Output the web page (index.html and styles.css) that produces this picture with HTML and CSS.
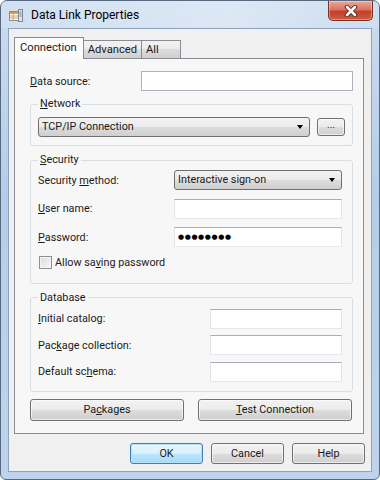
FILE: index.html
```html
<!DOCTYPE html>
<html lang="en">
<head>
    <meta charset="UTF-8">
    <title>Data Link Properties</title>
    <link rel="stylesheet" href="styles.css">
</head>
<body>
    <div class="window">
        <div class="titlebar">
            <svg class="app-icon" width="16" height="16" viewBox="0 0 16 16">
                <rect x="1.5" y="3.5" width="9" height="9" fill="#fff" stroke="#8a8a8a"/>
                <rect x="2" y="4" width="8" height="2" fill="#e39a3b"/>
                <path d="M2 8h8M2 10h8M5 6v6" stroke="#c9a36a" stroke-width="1"/>
                <rect x="10.5" y="1.5" width="4" height="12" fill="#dfe6ee" stroke="#7d8794"/>
                <path d="M11.5 4h2M11.5 6h2M11.5 8h2" stroke="#6b7683"/>
            </svg>
            <span class="title">Data Link Properties</span>
            <div class="close-btn">
                <svg width="14" height="12" viewBox="0 0 14 12">
                    <path d="M3 2l8 8M11 2l-8 8" stroke="#5a2118" stroke-width="4.4" stroke-linecap="round"/>
                    <path d="M3 2l8 8M11 2l-8 8" stroke="#fff" stroke-width="2.6" stroke-linecap="round"/>
                </svg>
            </div>
        </div>

        <div class="client">
            <div class="tabs">
                <div class="tab active">Connection</div>
                <div class="tab">Advanced</div>
                <div class="tab">All</div>
            </div>

            <div class="pane">
                <div class="row source-row">
                    <label><u>D</u>ata source:</label>
                    <div class="textbox wide"></div>
                </div>

                <fieldset class="group network">
                    <legend><u>N</u>etwork</legend>
                    <div class="net-row">
                        <div class="combo net-combo">TCP/IP Connection<span class="arrow"></span></div>
                        <div class="btn dots">...</div>
                    </div>
                </fieldset>

                <fieldset class="group security">
                    <legend><u>S</u>ecurity</legend>
                    <div class="row sec-row">
                        <label>Security <u>m</u>ethod:</label>
                        <div class="combo sec-field">Interactive sign-on<span class="arrow"></span></div>
                    </div>
                    <div class="row sec-row">
                        <label><u>U</u>ser name:</label>
                        <div class="textbox sec-field"></div>
                    </div>
                    <div class="row sec-row">
                        <label><u>P</u>assword:</label>
                        <div class="textbox sec-field"><span class="pw">●●●●●●●●</span></div>
                    </div>
                    <div class="check-row">
                        <span class="checkbox"></span>
                        <span>Allow sa<u>v</u>ing password</span>
                    </div>
                </fieldset>

                <fieldset class="group database">
                    <legend>Database</legend>
                    <div class="row db-row">
                        <label><u>I</u>nitial catalog:</label>
                        <div class="textbox db-field"></div>
                    </div>
                    <div class="row db-row">
                        <label>Pac<u>k</u>age collection:</label>
                        <div class="textbox db-field"></div>
                    </div>
                    <div class="row db-row">
                        <label>Default sc<u>h</u>ema:</label>
                        <div class="textbox db-field"></div>
                    </div>
                </fieldset>

                <div class="pane-buttons">
                    <div class="btn big">Pa<u>c</u>kages</div>
                    <div class="btn big"><u>T</u>est Connection</div>
                </div>
            </div>

            <div class="dialog-buttons">
                <div class="btn action default">OK</div>
                <div class="btn action">Cancel</div>
                <div class="btn action">Help</div>
            </div>
        </div>
    </div>
</body>
</html>
```
FILE: styles.css
```css
* {
    box-sizing: border-box;
}
body {
    margin: 0;
    font-family: Roboto, "Liberation Sans", sans-serif;
    font-size: 10.8px;
    color: #1a1a1a;
    background: #ffffff;
}
u {
    text-decoration: underline;
    text-underline-offset: 1px;
}
.window {
    width: 380px;
    height: 480px;
    border: 1px solid #58697f;
    border-radius: 7px 7px 6px 6px;
    background: linear-gradient(to bottom, #cadcf0 0%, #b6cde9 40%, #bfd4ec 100%);
    padding: 0 7px 7px 7px;
    display: flex;
    flex-direction: column;
}
.titlebar {
    height: 27px;
    display: flex;
    align-items: center;
    background: linear-gradient(to right, rgba(255, 255, 255, 0.15), rgba(255, 255, 255, 0.35) 60%, rgba(255, 255, 255, 0.1));
    margin: 0 -7px;
    padding-left: 7px;
}
.app-icon {
    margin-right: 7px;
    margin-top: 2px;
}
.title {
    font-size: 12px;
    color: #000;
    margin-top: 1px;
}
.close-btn {
    margin-left: auto;
    margin-right: 6px;
    align-self: flex-start;
    width: 45px;
    height: 20px;
    border: 1px solid #7a2f24;
    border-top: none;
    border-radius: 0 0 5px 5px;
    background: linear-gradient(to bottom, #e9a99b 0%, #d9735f 45%, #c4402a 55%, #cf5a40 100%);
    display: flex;
    align-items: center;
    justify-content: center;
    box-shadow: inset 0 0 0 1px rgba(255, 255, 255, 0.35);
}
.client {
    flex: 1;
    background: #f0f0f0;
    border: 1px solid #8ea2bd;
    padding: 8px 6px 7px 5px;
    display: flex;
    flex-direction: column;
}
.tabs {
    display: flex;
    height: 21px;
    align-items: flex-end;
    position: relative;
    z-index: 1;
}
.tab {
    height: 18px;
    padding: 0 3px 0 4px;
    border: 1px solid #898c95;
    border-bottom: none;
    border-left: none;
    background: linear-gradient(to bottom, #f2f2f2 0%, #ebebeb 50%, #dddddd 50%, #cfcfcf 100%);
    line-height: 18px;
    font-size: 11.2px;
}
.tab:nth-child(2) {
    padding-right: 4px;
}
.tab:nth-child(3) {
    width: 39px;
}
.tab.active {
    background: #fbfbfb;
    border-left: 1px solid #898c95;
    padding: 0 6px 0 5px;
    line-height: 19px;
    margin-bottom: -1px;
    height: 22px;
}
.pane {
    flex: 1;
    border: 1px solid #898c95;
    background: #f7f7f7;
    margin-right: 1px;
    padding: 12px 10px 0 15px;
    display: flex;
    flex-direction: column;
}
.row {
    display: flex;
    align-items: center;
}
.row label {
    flex: 1;
}
.source-row {
    height: 20px;
}
.textbox {
    height: 20px;
    background: #fff;
    border: 1px solid #e2e3ea;
    border-top-color: #abadb3;
    border-bottom-color: #e3e9ef;
}
.textbox.wide {
    width: 212px;
    border-color: #aab4c0;
}
.group {
    margin: 6px 0 0 0;
    border: 1px solid #d5dfe5;
    border-radius: 3px;
    padding: 0 10px 0 7px;
    min-width: 0;
}
.group legend {
    padding: 0 2px;
    line-height: 14px;
    margin-left: 0;
}
.network {
    padding-top: 6px;
    padding-right: 6px;
    padding-bottom: 8px;
}
.net-row {
    display: flex;
    align-items: center;
}
.combo {
    position: relative;
    height: 20px;
    border: 1px solid #707070;
    border-radius: 3px;
    background: linear-gradient(to bottom, #f2f2f2 0%, #ebebeb 50%, #dddddd 50%, #cfcfcf 100%);
    padding-left: 3px;
    line-height: 18px;
}
.arrow {
    position: absolute;
    right: 6px;
    top: 7px;
    border-left: 3.5px solid transparent;
    border-right: 3.5px solid transparent;
    border-top: 4px solid #000;
}
.net-combo {
    width: 272px;
    flex-shrink: 0;
}
.btn {
    border: 1px solid #707070;
    border-radius: 3px;
    background: linear-gradient(to bottom, #f2f2f2 0%, #ebebeb 50%, #dddddd 50%, #cfcfcf 100%);
    text-align: center;
    box-shadow: inset 0 0 0 1px rgba(255, 255, 255, 0.6);
}
.btn.dots {
    width: 28px;
    height: 18px;
    margin-left: 7px;
    line-height: 12px;
    font-size: 10px;
    color: #333;
}
.security {
    margin-top: 7px;
    padding-top: 3px;
    padding-bottom: 14px;
}
.sec-row {
    height: 20px;
    margin-bottom: 8.5px;
}
.sec-field {
    width: 168px;
}
.pw {
    font-family: "DejaVu Sans", sans-serif;
    font-size: 7px;
    letter-spacing: 0.6px;
    line-height: 18px;
    padding-left: 3px;
    color: #000;
}
.check-row {
    display: flex;
    align-items: center;
    margin-left: 1px;
    margin-top: 3px;
}
.checkbox {
    width: 13px;
    height: 13px;
    border: 1px solid #8e8f8f;
    background: linear-gradient(135deg, #dcdcdc 0%, #f7f7f7 100%);
    box-shadow: inset 0 0 0 1px #f4f4f4;
    margin-right: 3px;
}
.database {
    margin-top: 7px;
    padding-top: 4px;
    padding-bottom: 9px;
}
.db-row {
    height: 20px;
    margin-bottom: 6.5px;
}
.db-row:last-child {
    margin-bottom: 0;
}
.db-field {
    width: 132px;
}
.pane-buttons {
    display: flex;
    justify-content: space-between;
    margin-top: 7px;
    padding-right: 1px;
}
.btn.big {
    width: 154px;
    height: 22px;
    line-height: 20px;
}
.dialog-buttons {
    display: flex;
    justify-content: flex-end;
    gap: 8px;
    margin-top: 9px;
}
.btn.action {
    width: 73px;
    height: 21px;
    line-height: 19px;
}
.btn.default {
    border-color: #3c7fb1;
    background: linear-gradient(to bottom, #eaf6fd 0%, #d9f0fc 50%, #bee6fd 50%, #a7d9f5 100%);
    box-shadow: inset 0 0 0 1px #b4e2fa;
}
```
